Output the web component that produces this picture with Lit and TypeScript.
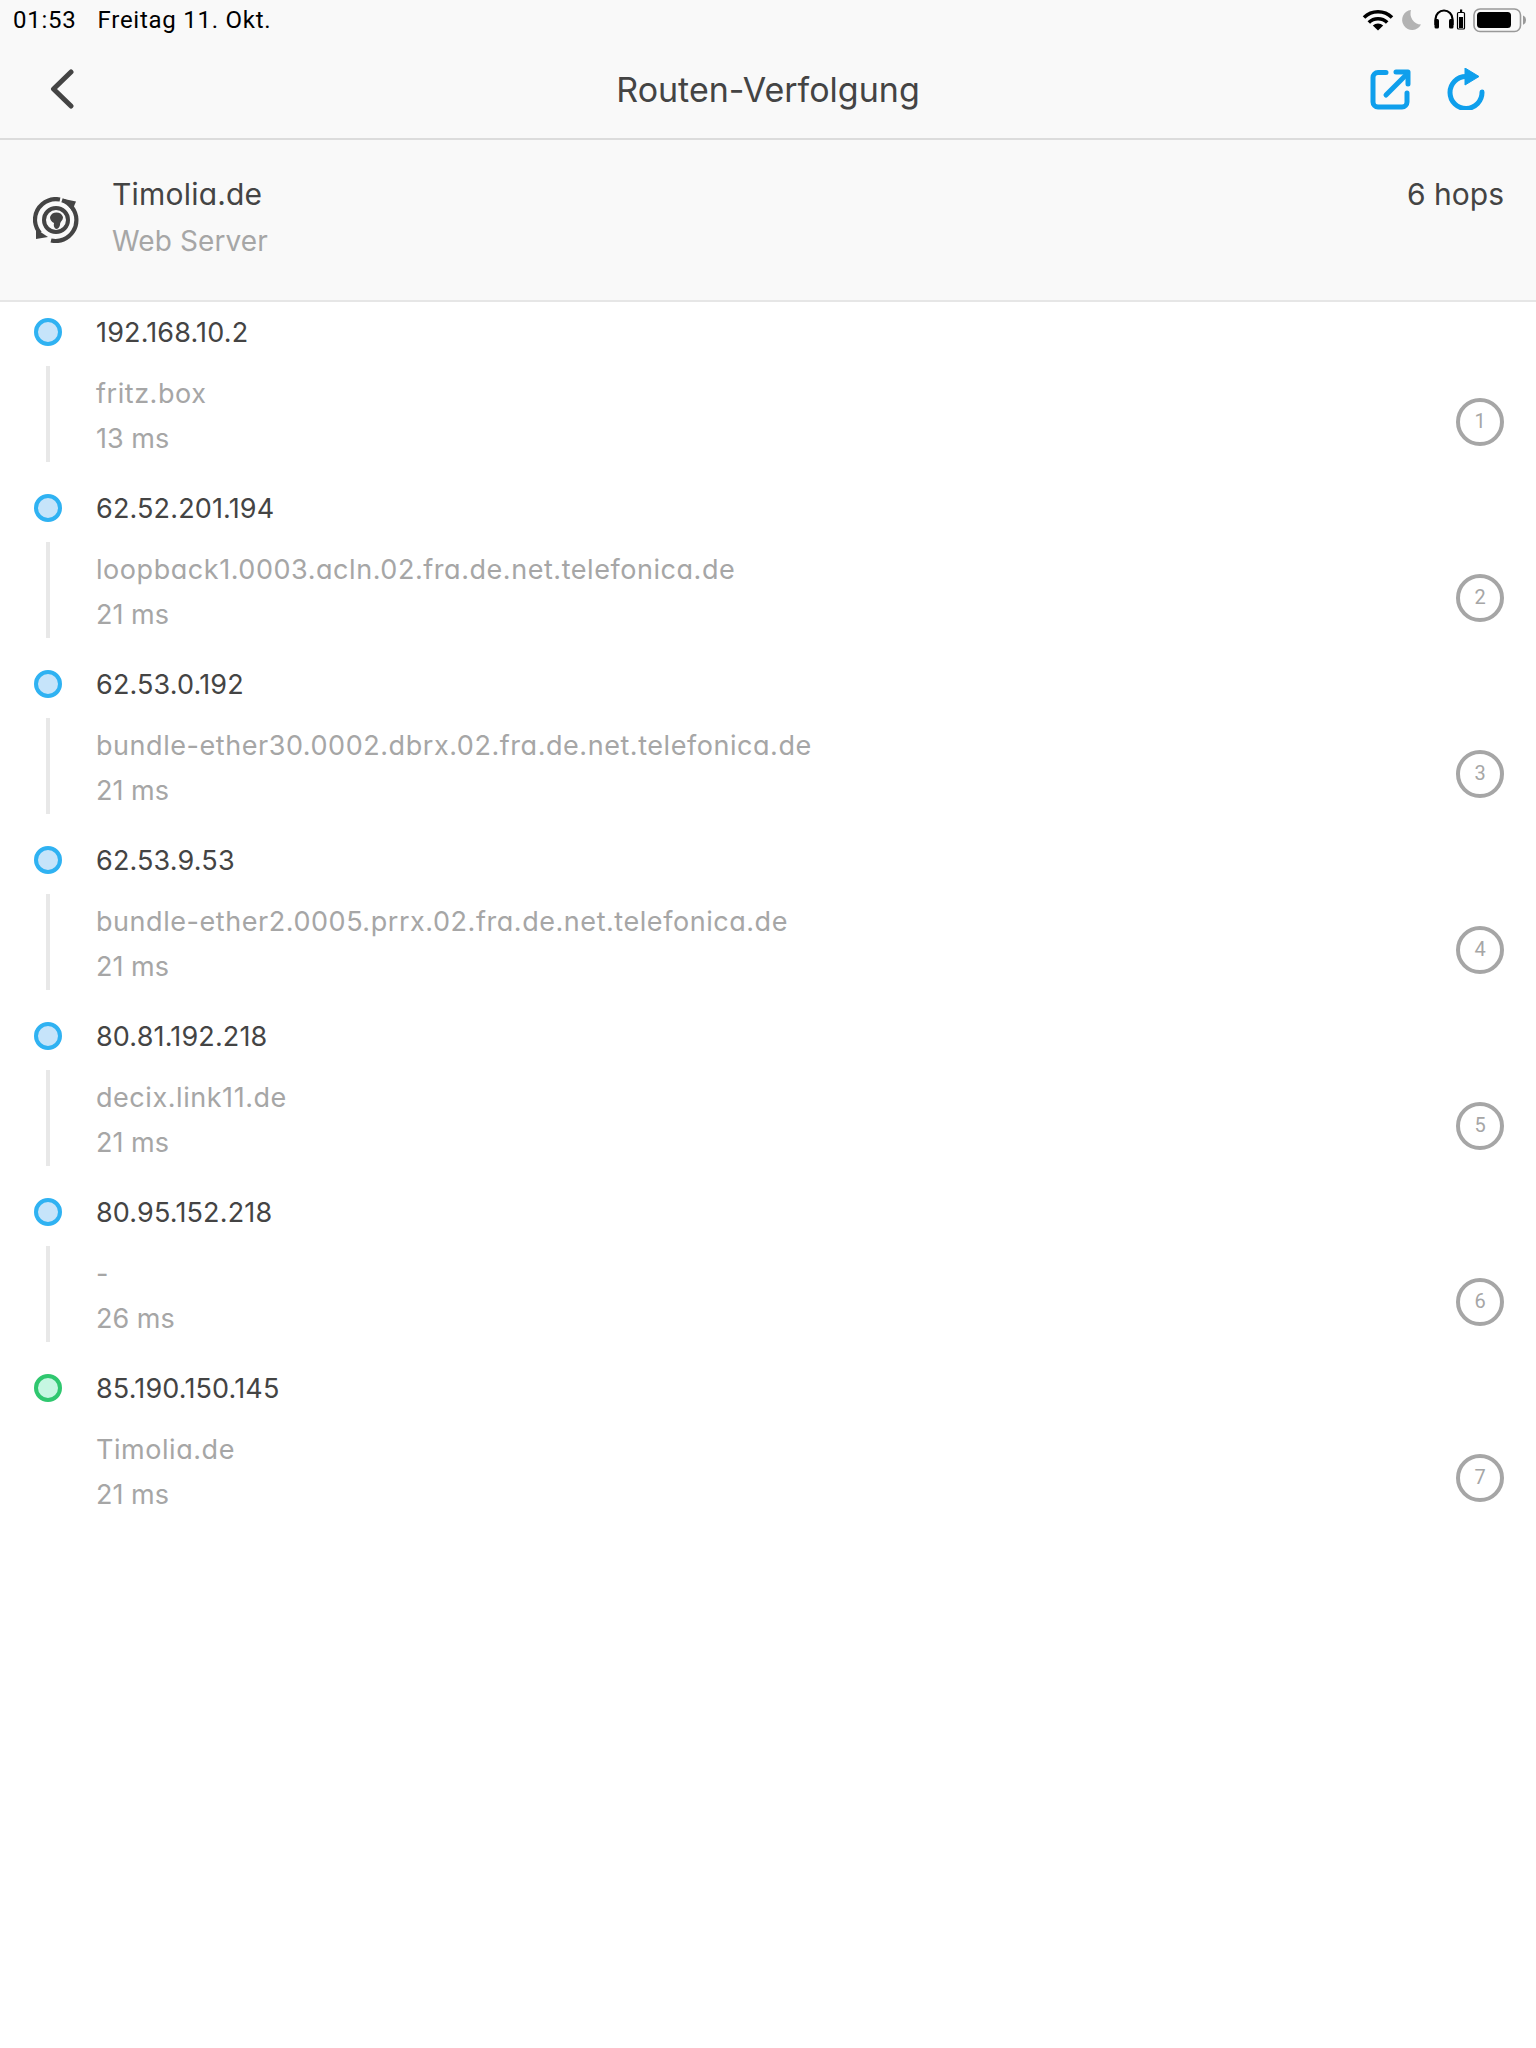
import { LitElement, html, css, svg } from "lit";
import { customElement } from "lit/decorators.js";

const hops = [
  { ip: "192.168.10.2", name: "fritz.box", ms: "13 ms" },
  { ip: "62.52.201.194", name: "loopback1.0003.acln.02.fra.de.net.telefonica.de", ms: "21 ms" },
  { ip: "62.53.0.192", name: "bundle-ether30.0002.dbrx.02.fra.de.net.telefonica.de", ms: "21 ms" },
  { ip: "62.53.9.53", name: "bundle-ether2.0005.prrx.02.fra.de.net.telefonica.de", ms: "21 ms" },
  { ip: "80.81.192.218", name: "decix.link11.de", ms: "21 ms" },
  { ip: "80.95.152.218", name: "-", ms: "26 ms" },
  { ip: "85.190.150.145", name: "Timolia.de", ms: "21 ms" },
];

@customElement("app-root")
export class AppRoot extends LitElement {
  static styles = css`
    :host { display: block; width: 1536px; height: 2048px; background: #fff; font-family: "Inter", "Lato", sans-serif; font-feature-settings: "cv11" 1; color: #444; overflow: hidden; }
    .top { background: #f9f9f9; }
    .status { height: 40px; display: flex; align-items: center; padding: 0 10px 0 13px; font-family: "Roboto", sans-serif; font-size: 24px; color: #000; letter-spacing: 0.75px; }
    .status .time { margin-right: 21px; }
    .status .icons { margin-left: auto; display: flex; }
    .status svg { display: block; }
    .nav { height: 98px; border-bottom: 2px solid #dcdcdc; display: flex; align-items: center; padding: 0 51px 0 50px; position: relative; }
    .nav .title { position: absolute; left: 0; right: 0; text-align: center; font-size: 34px; }
    .nav svg { display: block; }
    .nav .actions { margin-left: auto; display: flex; gap: 36px; }
    .head { height: 160px; border-bottom: 2px solid #e6e6e6; display: flex; padding: 0 32px 0 33px; }
    .head svg { display: block; margin-top: 57px; }
    .head .txt { margin-left: 33px; padding-top: 34px; }
    .head .t1 { font-size: 30px; line-height: 40px; letter-spacing: 0.2px; }
    .head .t2 { font-size: 28px; line-height: 40px; margin-top: 7px; color: #a6a6a6; letter-spacing: 0.1px; }
    .head .hops { margin-left: auto; padding-top: 34px; font-size: 30px; line-height: 40px; }
    .row { display: grid; grid-template-columns: 96px 1fr 48px; grid-template-rows: 28px 96px; row-gap: 20px; padding: 16px 32px 32px 0; height: 176px; box-sizing: border-box; }
    .dotcell { padding-left: 34px; }
    .dot { width: 28px; height: 28px; box-sizing: border-box; border-radius: 50%; border: 4px solid #2fb2f2; background: #c6e4fa; }
    .dot.end { border-color: #2fc76f; background: #c6f7e2; }
    .ip { font-size: 27px; line-height: 30px; color: #444; letter-spacing: 0.15px; }
    .linecell { padding-left: 46px; }
    .line { width: 4px; height: 96px; background: #e8e8e8; }
    .info { margin-top: 11px; }
    .name, .ms { font-size: 27px; line-height: 34px; color: #a6a6a6; }
    .name { letter-spacing: 0.55px; }
    .ms { margin-top: 11px; }
    .badge { width: 48px; height: 48px; box-sizing: border-box; border: 4px solid #a6a6a6; border-radius: 50%; color: #a6a6a6; font-size: 20px; display: flex; align-items: center; justify-content: center; align-self: center; margin-top: 16px; padding-bottom: 3px; font-family: "Roboto", sans-serif; }
  `;

  render() {
    return html`
      <div class="top">
        <div class="status">
          <span class="time">01:53</span><span>Freitag 11. Okt.</span>
          <span class="icons">
            <svg width="170" height="40" viewBox="1356 0 170 40">
              ${svg`
                <path d="M1364 17.5a20 20 0 0 1 28 0M1368.8 22.5a13 13 0 0 1 18.4 0" fill="none" stroke="#000" stroke-width="3.6"/>
                <path d="M1372.8 25.6a7.5 7.5 0 0 1 10.4 0L1378 30.500z" fill="#000"/>
                <path d="M1411 10a10 10 0 1 0 10 14.5a11 11 0 0 1 -10 -14.5z" fill="#b3b3b3"/>
                <path d="M1435.500 25v-6a8.500 8.500 0 0 1 17 0v6" fill="none" stroke="#000" stroke-width="2.200"/>
                <rect x="1434.500" y="19" width="4.500" height="9.500" rx="1.500" fill="#000"/>
                <rect x="1449" y="19" width="4.500" height="9.500" rx="1.500" fill="#000"/>
                <rect x="1457.500" y="12.500" width="7" height="16.500" rx="1" fill="none" stroke="#000" stroke-width="1.200"/>
                <rect x="1460" y="9.500" width="2.200" height="3" fill="#000"/>
                <rect x="1459" y="17" width="4" height="11" fill="#000"/>
                <rect x="1474" y="9" width="46.500" height="22.500" rx="6" fill="none" stroke="#999" stroke-width="1.600"/>
                <rect x="1477" y="12" width="34" height="16" rx="3.500" fill="#000"/>
                <path d="M1523 15.500a5 5 0 0 1 3 4.700a5 5 0 0 1 -3 4.500z" fill="#999"/>
              `}
            </svg>
          </span>
        </div>
        <div class="nav">
          <span class="title">Routen-Verfolgung</span>
          <svg width="24" height="40" viewBox="0 0 24 40"><path d="M21 3L3.500 20L21 37" fill="none" stroke="#444" stroke-width="5" stroke-linecap="round" stroke-linejoin="round"/></svg>
          <span class="actions">
            <svg width="42" height="42" viewBox="0 0 42 42" fill="none" stroke="#0f9fec" stroke-width="5" stroke-linecap="round" stroke-linejoin="round">
              <path d="M17 4.500H9a5 5 0 0 0 -5 5V34a5 5 0 0 0 5 5h24a5 5 0 0 0 5 -5V25"/>
              <path d="M17 27L37 7"/>
              <path d="M27 4h12v12"/>
            </svg>
            <svg width="38" height="42" viewBox="0 0 38 42">
              <path d="M19 8.500A16 16 0 1 0 35 24" fill="none" stroke="#0f9fec" stroke-width="5" stroke-linecap="round"/>
              <path d="M18 0L32 8.500L18 17z" fill="#0f9fec" stroke="#0f9fec" stroke-width="1" stroke-linejoin="round"/>
            </svg>
          </span>
        </div>
        <div class="head">
          <svg width="46" height="46" viewBox="0 0 46 46" fill="none" stroke="#444">
            <circle cx="23" cy="23" r="12" stroke-width="4"/>
            <path d="M29 3.200A21 21 0 0 1 30.500 42.500A21 21 0 0 1 18 43.500" stroke-width="4.200"/>
            <path d="M27 2.500A21 21 0 0 0 2 24A21 21 0 0 0 7 36" stroke-width="4.200"/>
            <path d="M31 2L43 4.500L39 14z" fill="#444" stroke="none"/>
            <path d="M3 32L15 40L3 42z" fill="#444" stroke="none"/>
            <path d="M17 20a7 7 0 0 1 13 0c0 4 -3 4 -3 8q-1 4 -4 4q-3 -2 -2 -6q-4 -2 -4 -6z" fill="#444" stroke="none"/>
          </svg>
          <div class="txt">
            <div class="t1">Timolia.de</div>
            <div class="t2">Web Server</div>
          </div>
          <div class="hops">6 hops</div>
        </div>
      </div>
      ${hops.map((h, i) => html`
        <div class="row">
          <div class="dotcell"><div class="dot ${i === hops.length - 1 ? "end" : ""}"></div></div>
          <div class="ip">${h.ip}</div>
          <div></div>
          <div class="linecell">${i < hops.length - 1 ? html`<div class="line"></div>` : ""}</div>
          <div class="info"><div class="name">${h.name}</div><div class="ms">${h.ms}</div></div>
          <div class="badge">${i + 1}</div>
        </div>
      `)}
    `;
  }
}
